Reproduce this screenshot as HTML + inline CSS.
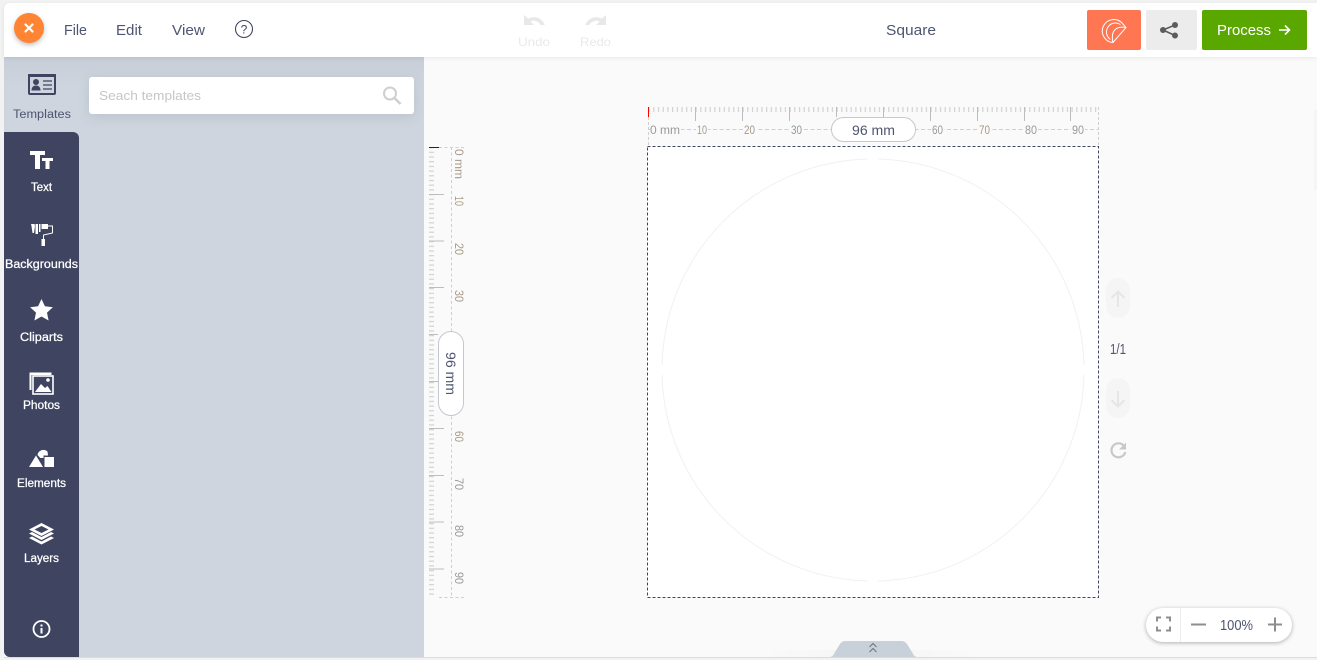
<!DOCTYPE html>
<html lang="en"><head><meta charset="utf-8"><title>Editor</title>
<style>
html,body{margin:0;padding:0;background:#f2f2f2;width:1317px;height:660px;overflow:hidden}
.a{position:absolute}
svg{position:absolute;left:0;top:0}
text{font-family:"Liberation Sans",sans-serif}
</style></head><body>
<div class="a" style="left:4px;top:57px;width:1313px;height:600px;background:#fafafa"></div>
<div class="a" style="left:4px;top:57px;width:420px;height:600px;background:#ced5de;border-bottom-left-radius:6px"></div>
<div class="a" style="left:4px;top:57px;width:420px;height:30px;background:linear-gradient(#c8ced8,#ced5de)"></div>
<div class="a" style="left:4px;top:132px;width:75px;height:525px;background:#3f4560;border-radius:0 6px 0 6px"></div>
<div class="a" style="left:4px;top:3px;width:1313px;height:54px;background:#fff;border-radius:6px 0 0 0;box-shadow:0 1px 4px rgba(0,0,0,.08)"></div>
<div class="a" style="left:89px;top:77px;width:325px;height:37px;background:#fff;border-radius:3px;box-shadow:0 3px 12px rgba(90,100,125,.16)"></div>
<div class="a" style="left:14px;top:13px;width:30px;height:30px;background:#ff8433;border-radius:50%;box-shadow:0 2px 5px rgba(0,0,0,.25)"></div>
<div class="a" style="left:1146px;top:608px;width:146px;height:34px;background:#fff;border-radius:17px;box-shadow:0 1px 4px rgba(0,0,0,.3)"></div>
<div class="a" style="left:647px;top:146px;width:452px;height:452px;background:#fff"></div>
<div class="a" style="left:1106px;top:278px;width:24px;height:40px;background:#f5f5f5;border-radius:12px"></div>
<div class="a" style="left:1106px;top:378px;width:24px;height:40px;background:#f5f5f5;border-radius:12px"></div>
<div class="a" style="left:760px;top:650px;width:220px;height:7px;background:linear-gradient(90deg,rgba(0,0,0,0),rgba(0,0,0,.025),rgba(0,0,0,0))"></div>
<div class="a" style="left:4px;top:657px;width:1313px;height:1px;background:#dcdcdc"></div>
<div class="a" style="left:1314px;top:110px;width:3px;height:80px;background:#f5f5f5"></div>

<svg width="1317" height="660" viewBox="0 0 1317 660" xmlns="http://www.w3.org/2000/svg">
<defs>
<pattern id="tx" x="648.5" y="107" width="4.7" height="5" patternUnits="userSpaceOnUse"><rect width="1.2" height="5" fill="#d2d2d2"/></pattern>
<pattern id="ty" x="429" y="147" width="5" height="4.7" patternUnits="userSpaceOnUse"><rect width="5" height="1.2" fill="#d2d2d2"/></pattern>
</defs>

<path d="M25.500 24.500l7 7M32.500 24.500l-7 7" stroke="#fff" stroke-width="2.200" stroke-linecap="round"/>
<g fill="#4e5570" font-size="14.500">
<text x="64" y="35" textLength="23" lengthAdjust="spacingAndGlyphs">File</text>
<text x="116" y="35" textLength="26" lengthAdjust="spacingAndGlyphs">Edit</text>
<text x="172" y="35" textLength="33" lengthAdjust="spacingAndGlyphs">View</text>
<text x="886" y="35" textLength="50" lengthAdjust="spacingAndGlyphs">Square</text>
</g>
<circle cx="244" cy="29" r="8.500" fill="none" stroke="#3f4560" stroke-width="1.100"/>
<text x="244" y="33.500" font-size="12" fill="#3f4560" text-anchor="middle">?</text>

<path d="M524 15v10h10l-3.600-3.600c3.600-1.800 7.600-.4 10.400 3.600h4c-2.800-7-9.800-10-16.600-6.400z" fill="#e8e8e8"/>
<path d="M606 15v10h-10l3.600-3.600c-3.600-1.800-7.600-.4-10.400 3.600h-4c2.800-7 9.800-10 16.600-6.400z" fill="#e8e8e8"/>
<g fill="#e9e9e9" font-size="12">
<text x="518" y="46" textLength="32" lengthAdjust="spacingAndGlyphs">Undo</text>
<text x="580" y="46" textLength="31" lengthAdjust="spacingAndGlyphs">Redo</text>
</g>

<rect x="1087" y="10" width="54" height="40" rx="2" fill="#ff7752"/>
<rect x="1146" y="10" width="51" height="40" rx="2" fill="#ececec"/>
<rect x="1202" y="10" width="105" height="40" rx="2" fill="#5aa700"/>
<g fill="none" stroke="#fff" stroke-width="1">
<path d="M1122.500 23.500A11.500 11.500 0 1 0 1113 42.500L1126 27.500z"/>
<path d="M1120.500 24.500A9 9 0 1 0 1110.500 39.500"/>
<path d="M1126 27.500C1118 26 1110 29 1113 42.500"/>
</g>
<g fill="#5c5c5c"><circle cx="1175" cy="25" r="3"/><circle cx="1175" cy="35.500" r="3"/><circle cx="1163" cy="30" r="3"/></g>
<path d="M1175 25l-12 5 12 5.500" fill="none" stroke="#5c5c5c" stroke-width="1.600"/>
<text x="1217" y="35" font-size="14.500" fill="#fff" textLength="54" lengthAdjust="spacingAndGlyphs">Process</text>
<path d="M1279 30h10M1285 25.500l4.500 4.500-4.500 4.500" fill="none" stroke="#fff" stroke-width="1.600"/>

<text x="99" y="100" font-size="12.500" fill="#c6c6c6" textLength="102" lengthAdjust="spacingAndGlyphs">Seach templates</text>
<circle cx="390" cy="93.500" r="6" fill="none" stroke="#cfcfcf" stroke-width="2"/>
<path d="M394.500 98l6 6" stroke="#cfcfcf" stroke-width="2.600"/>

<rect x="29" y="75" width="26" height="19" rx="1" fill="none" stroke="#3f4560" stroke-width="2"/>
<path d="M28 74h28v3H28z" fill="#3f4560"/>
<circle cx="36" cy="82" r="3" fill="#3f4560"/><path d="M31.500 90.500c0-3.500 2-5 4.500-5s4.500 1.500 4.500 5z" fill="#3f4560"/>
<path d="M43 81h9M43 85h9M43 89h9" stroke="#3f4560" stroke-width="1.300"/>
<text x="13" y="118" font-size="11.500" fill="#4e5570" textLength="58" lengthAdjust="spacingAndGlyphs">Templates</text>
<g fill="#fff">
<path d="M30 151h15v4h-5v14h-5v-14h-5z"/>
<path d="M42 158h11v3h-3.500v8h-4v-8H42z"/>
<g font-size="11.500" stroke="#fff" stroke-width=".25">
<text x="31" y="191" textLength="21" lengthAdjust="spacingAndGlyphs">Text</text>
<text x="5" y="268" textLength="73" lengthAdjust="spacingAndGlyphs">Backgrounds</text>
<text x="20" y="341" textLength="43" lengthAdjust="spacingAndGlyphs">Cliparts</text>
<text x="23" y="409" textLength="37" lengthAdjust="spacingAndGlyphs">Photos</text>
<text x="17" y="487" textLength="49" lengthAdjust="spacingAndGlyphs">Elements</text>
<text x="24" y="562" textLength="35" lengthAdjust="spacingAndGlyphs">Layers</text>
</g>
<path d="M31 224h3.500l.5 2-1 7h-1.500l-1-7zM35.500 224h2.500v10h-2.500zM39 224h1.500v8H39zM41.500 224h6.500v5h-6.500z"/>
<path d="M48 226h4.500v7l-9 2v4" fill="none" stroke="#fff" stroke-width="1"/>
<rect x="41.500" y="239" width="3.500" height="7"/>
<path d="M41.500 299l3.400 7.300 8 .9-5.900 5.400 1.600 7.900-7.100-4-7.100 4 1.600-7.900-5.900-5.400 8-.9z"/>
<path d="M29.500 377v-4.500h22v2.500h-20v15h-2z"/>
<rect x="33" y="376" width="20" height="18" fill="none" stroke="#fff" stroke-width="1.600"/>
<path d="M35 392l6-8 4 4 2.500-2 4 6z"/><circle cx="48" cy="380" r="1.800"/>
<path d="M29 467l7-11.500 7 11.500z"/>
<path d="M37.500 455a6 6 0 0 1 10-3.500l.5 4H43.500V458h-3.200z"/>
<rect x="44.500" y="457" width="9.500" height="10"/>
<path d="M41.500 523l12.500 6.500-12.500 6.500-12.500-6.500zM41.500 526l-7 3.500 7 3.500 7-3.500z" fill-rule="evenodd"/>
<path d="M29 533.500l3-1.500 9.500 5 9.500-5 3 1.500-12.500 6.500zM29 538l3-1.500 9.500 5 9.500-5 3 1.500-12.500 6.500z"/>
<circle cx="41.500" cy="629" r="8" fill="none" stroke="#fff" stroke-width="1.800"/>
<rect x="40.500" y="628" width="2" height="5.500"/><rect x="40.500" y="624.500" width="2" height="2"/>
</g>

<rect x="648" y="107" width="451" height="5" fill="url(#tx)"/>
<path d="M695.500 107v14M742.500 107v14M789.500 107v14M836.500 107v10M883.500 107v10M930.500 107v14M977.500 107v14M1024.500 107v14M1070.500 107v14" stroke="#bdbdbd" stroke-width="1"/>
<path d="M648.500 107v10" stroke="#f00" stroke-width="1"/>
<path d="M648.500 117v29M1098.500 107v39" stroke="#cfcfcf" stroke-dasharray="3 2"/>
<path d="M648 129.500h451" stroke="#cfcfcf" stroke-dasharray="4 2.500"/>
<g font-size="11.500">
<rect x="650" y="124" width="31" height="12" fill="#fafafa"/><rect x="696" y="124" width="12" height="12" fill="#fafafa"/><rect x="743" y="124" width="13" height="12" fill="#fafafa"/><rect x="790" y="124" width="13" height="12" fill="#fafafa"/><rect x="931" y="124" width="13" height="12" fill="#fafafa"/><rect x="978" y="124" width="13" height="12" fill="#fafafa"/><rect x="1024" y="124" width="14" height="12" fill="#fafafa"/><rect x="1071" y="124" width="14" height="12" fill="#fafafa"/>
<g fill="#9a9a9a">
<text x="650" y="134" textLength="30" lengthAdjust="spacingAndGlyphs">0 mm</text>
<text x="697" y="134" textLength="10" lengthAdjust="spacingAndGlyphs" fill="#a89a88">10</text>
<text x="744" y="134" textLength="11" lengthAdjust="spacingAndGlyphs" fill="#a89a88">20</text>
<text x="791" y="134" textLength="11" lengthAdjust="spacingAndGlyphs" fill="#8aa090">30</text>
<text x="932" y="134" textLength="11" lengthAdjust="spacingAndGlyphs">60</text>
<text x="979" y="134" textLength="11" lengthAdjust="spacingAndGlyphs" fill="#a89a88">70</text>
<text x="1025" y="134" textLength="12" lengthAdjust="spacingAndGlyphs">80</text>
<text x="1072" y="134" textLength="12" lengthAdjust="spacingAndGlyphs">90</text>
</g></g>
<rect x="831.500" y="117.500" width="84" height="24" rx="12" fill="#fff" stroke="#c4c8d2"/>
<text x="852" y="135" font-size="13.500" fill="#4e5570" textLength="43" lengthAdjust="spacingAndGlyphs">96 mm</text>

<rect x="429" y="147.500" width="5" height="450" fill="url(#ty)"/>
<path d="M429 194.500h15M429 241h15M429 287.500h15M429 334.500h9M429 381.500h9M429 428.500h15M429 475.500h15M429 522h15M429 569h15" stroke="#bdbdbd"/>
<path d="M429 147.500h10" stroke="#700" stroke-width="1"/>
<path d="M439 147.500h25M439 597.500h25M451.500 147v450" stroke="#cfcfcf" stroke-dasharray="3 2.500"/>
<g font-size="11.500">
<rect x="453" y="149" width="13" height="31" fill="#fafafa"/>
<g fill="#a89a88">
<text transform="translate(455,149) rotate(90)" textLength="30" lengthAdjust="spacingAndGlyphs">0 mm</text>
<text transform="translate(455,196) rotate(90)" textLength="10" lengthAdjust="spacingAndGlyphs">10</text>
<text transform="translate(455,243) rotate(90)" textLength="12" lengthAdjust="spacingAndGlyphs">20</text>
<text transform="translate(455,290) rotate(90)" textLength="12" lengthAdjust="spacingAndGlyphs">30</text>
<text transform="translate(455,431) rotate(90)" textLength="11" lengthAdjust="spacingAndGlyphs">60</text>
<text transform="translate(455,478) rotate(90)" textLength="12" lengthAdjust="spacingAndGlyphs" fill="#9a9a9a">70</text>
<text transform="translate(455,525) rotate(90)" textLength="12" lengthAdjust="spacingAndGlyphs" fill="#9a9a9a">80</text>
<text transform="translate(455,572) rotate(90)" textLength="12" lengthAdjust="spacingAndGlyphs" fill="#9a9a9a">90</text>
</g></g>
<rect x="438.500" y="331.500" width="25" height="84" rx="12.500" fill="#fff" stroke="#c4c8d2"/>
<text transform="translate(446,352) rotate(90)" font-size="13.500" fill="#4e5570" textLength="43" lengthAdjust="spacingAndGlyphs">96 mm</text>

<rect x="647.500" y="146.500" width="451" height="451" fill="none" stroke="#3f4560" stroke-dasharray="3 2"/>
<circle cx="873" cy="370" r="211" fill="none" stroke="#f1f1f1" stroke-width="1"/>
<path d="M868 159h10M868 581h10M662 365v10M1084 365v10" stroke="#fff" stroke-width="3"/>

<path d="M1118 307v-15M1111.500 298l6.500-6.500 6.500 6.500" fill="none" stroke="#e6e6e6" stroke-width="2"/>
<path d="M1118 391v15M1111.500 400l6.500 6.500 6.500-6.500" fill="none" stroke="#e6e6e6" stroke-width="2"/>
<text x="1110" y="354" font-size="14.500" fill="#4e5570" textLength="16" lengthAdjust="spacingAndGlyphs">1/1</text>
<path d="M1124 446a7 7 0 1 0 1.300 6" fill="none" stroke="#c8c8c8" stroke-width="2.200"/>
<path d="M1126 442.500v7h-7z" fill="#c8c8c8"/>

<path d="M1180.500 608v34" stroke="#ececec"/>
<path d="M1157 621.500v-4h4M1166 617.500h4v4M1170 626.500v4h-4M1161 630.500h-4v-4" fill="none" stroke="#8e8e8e" stroke-width="2"/>
<path d="M1191 624.500h15M1268 624.500h14M1275 617.500v14" stroke="#8e8e8e" stroke-width="2"/>
<text x="1220" y="630" font-size="14.500" fill="#4e5570" textLength="33" lengthAdjust="spacingAndGlyphs">100%</text>

<path d="M829 657c3 0 4-1 6-5l5-8c1.500-2 3-3 6-3h55c3 0 4.500 1 6 3l5 8c2 4 3 5 6 5z" fill="#c8d0da"/>
<path d="M869.500 647l3.500-3.500 3.500 3.500M869.500 652l3.500-3.500 3.500 3.500" fill="none" stroke="#6d7280" stroke-width="1"/>
</svg>
</body></html>
